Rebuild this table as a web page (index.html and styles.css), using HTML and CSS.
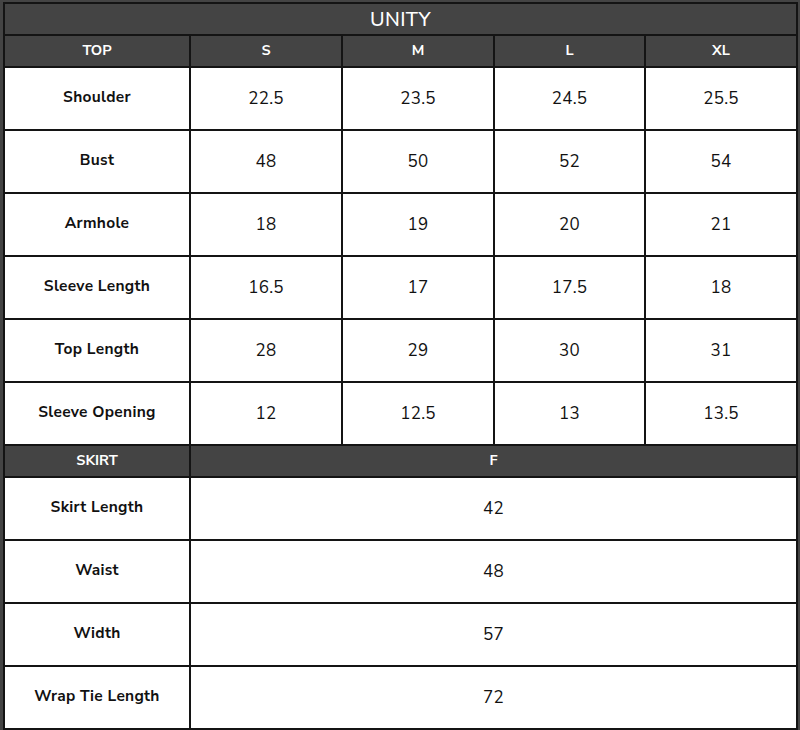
FILE: index.html
```html
<!DOCTYPE html>
<html>
<head>
<meta charset="utf-8">
<link rel="stylesheet" href="styles.css">
</head>
<body>
<div class="chart">
  <div class="title">UNITY</div>

  <div class="head">TOP</div>
  <div class="head">S</div>
  <div class="head">M</div>
  <div class="head">L</div>
  <div class="head">XL</div>

  <div class="label">Shoulder</div>
  <div class="val">22.5</div><div class="val">23.5</div><div class="val">24.5</div><div class="val">25.5</div>

  <div class="label">Bust</div>
  <div class="val">48</div><div class="val">50</div><div class="val">52</div><div class="val">54</div>

  <div class="label">Armhole</div>
  <div class="val">18</div><div class="val">19</div><div class="val">20</div><div class="val">21</div>

  <div class="label">Sleeve Length</div>
  <div class="val">16.5</div><div class="val">17</div><div class="val">17.5</div><div class="val">18</div>

  <div class="label">Top Length</div>
  <div class="val">28</div><div class="val">29</div><div class="val">30</div><div class="val">31</div>

  <div class="label">Sleeve Opening</div>
  <div class="val">12</div><div class="val">12.5</div><div class="val">13</div><div class="val">13.5</div>

  <div class="head">SKIRT</div>
  <div class="head span">F</div>

  <div class="label">Skirt Length</div>
  <div class="val span">42</div>

  <div class="label">Waist</div>
  <div class="val span">48</div>

  <div class="label">Width</div>
  <div class="val span">57</div>

  <div class="label">Wrap Tie Length</div>
  <div class="val span">72</div>
</div>
</body>
</html>
```

FILE: styles.css
```css
html, body {
  margin: 0;
  padding: 0;
  background: #444444;
  width: 800px;
  height: 730px;
  overflow: hidden;
}

.chart {
  margin: 2px 0 0 3px;
  width: 795px;
  box-sizing: border-box;
  display: grid;
  grid-template-columns: 184px 150px 150px 149px 150px;
  grid-template-rows: 30px 30px repeat(6, 61px) 30px repeat(4, 61px);
  gap: 2px;
  padding: 2px;
  background: #141414;
  font-family: "Nunito Sans", "Lato", "Open Sans", sans-serif;
}

.chart > div {
  display: flex;
  align-items: center;
  justify-content: center;
}

.title {
  grid-column: 1 / -1;
  background: #444444;
  color: #ffffff;
  font-size: 20px;
  font-weight: 500;
  letter-spacing: 0.4px;
}

.head {
  background: #444444;
  color: #ffffff;
  font-size: 14.5px;
  font-weight: 700;
  padding-bottom: 2px;
}

.label {
  background: #ffffff;
  color: #111111;
  font-size: 15.5px;
  font-weight: 700;
  letter-spacing: 0.3px;
  padding-bottom: 5px;
}

.val {
  background: #ffffff;
  color: #111111;
  font-size: 17px;
  font-weight: 400;
  letter-spacing: 0.2px;
}

.span {
  grid-column: 2 / -1;
}
```
